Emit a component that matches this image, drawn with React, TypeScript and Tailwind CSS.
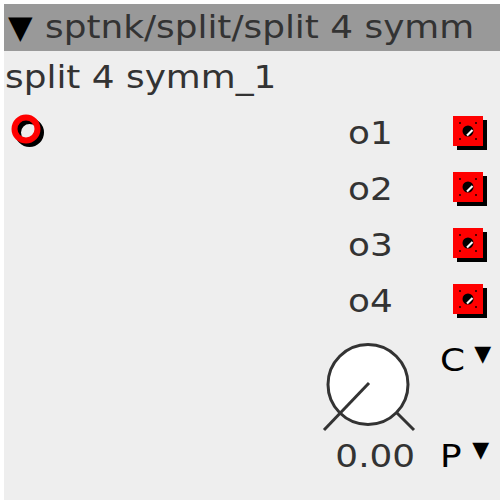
import React from 'react';

function OutPort() {
  return (
    <svg width="34" height="34" viewBox="0 0 34 34" className="block">
      <rect x="4" y="4" width="30" height="30" fill="#000" />
      <rect x="0" y="0" width="30" height="30" fill="#ff0000" />
      <rect x="6" y="6" width="2" height="2" fill="#550000" />
      <rect x="22" y="6" width="2" height="2" fill="#550000" />
      <rect x="6" y="22" width="2" height="2" fill="#550000" />
      <rect x="22" y="22" width="2" height="2" fill="#550000" />
      <circle cx="15" cy="15" r="5.5" fill="#000" />
      <path d="M14 19.5 L19.5 14" stroke="#fff" strokeWidth="2.2" />
    </svg>
  );
}

function InPort() {
  return (
    <svg width="40" height="40" viewBox="0 0 40 40" className="block">
      <circle cx="19.5" cy="19.5" r="11.5" fill="none" stroke="#000" strokeWidth="6" />
      <circle cx="16" cy="16" r="11.5" fill="none" stroke="#ff0000" strokeWidth="6" />
    </svg>
  );
}

export default function App() {
  const outputs = ['o1', 'o2', 'o3', 'o4'];

  return (
    <div className="min-h-screen bg-white p-1" style={{ fontFamily: '"DejaVu Sans", sans-serif' }}>
      <div className="w-[496px] h-[496px] bg-[#eeeeee] flex flex-col text-[#333333] overflow-hidden">
        {/* header */}
        <div className="h-[47px] shrink-0 bg-[#999999] pl-1 flex items-center text-[32px] leading-[47px] whitespace-nowrap">
          <span className="text-black">▼</span>
          <span className="ml-[12px] inline-block origin-left scale-x-[1.12]">sptnk/split/split 4 symm</span>
        </div>

        {/* instance name */}
        <div className="mt-[6px] pl-[1px] text-[32px] leading-[40px] whitespace-nowrap">
          <span className="inline-block origin-left scale-x-[1.12]">split 4 symm_1</span>
        </div>

        {/* ports */}
        <div className="mt-[8px] flex justify-between">
          <div className="pl-[6px]">
            <div className="h-[56px] flex items-center">
              <InPort />
            </div>
          </div>
          <div className="pr-[13px]">
            {outputs.map((o) => (
              <div key={o} className="h-[56px] flex items-center">
                <span className="w-[105px] text-[32px] leading-[56px]">
                  <span className="inline-block origin-left scale-x-[1.12]">{o}</span>
                </span>
                <OutPort />
              </div>
            ))}
          </div>
        </div>

        {/* knob + selectors */}
        <div className="flex pl-[316px]">
          <div className="w-[100px] flex flex-col items-center">
            <svg width="100" height="95" viewBox="0 0 100 95" className="block mt-[11px]">
              <circle cx="48" cy="44.5" r="40" fill="#fff" stroke="#333" strokeWidth="3" />
              <path d="M49 43 L4 90" stroke="#333" strokeWidth="3" />
              <path d="M77 73 L94 90" stroke="#333" strokeWidth="3" />
            </svg>
            <span className="mt-[3px] pl-[10px] text-[32px] leading-[36px] inline-block scale-x-[1.12]">0.00</span>
          </div>
          <div className="ml-[20px] flex flex-col text-black">
            <div className="mt-[13px] text-[32px] leading-[36px] flex items-start">
              <span className="inline-block origin-left scale-x-[1.12]">C</span>
              <span className="ml-[12px] text-[22px] leading-[22px] mt-[1px]">▼</span>
            </div>
            <div className="mt-[60px] text-[32px] leading-[36px] flex items-start">
              <span className="inline-block origin-left scale-x-[1.12]">P</span>
              <span className="ml-[13px] text-[22px] leading-[22px] mt-[1px]">▼</span>
            </div>
          </div>
        </div>
      </div>
    </div>
  );
}
